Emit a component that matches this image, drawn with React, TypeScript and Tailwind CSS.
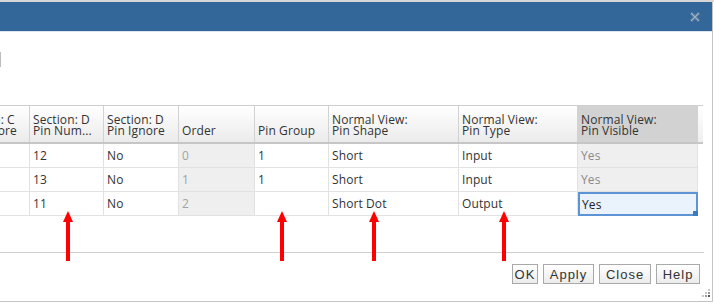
import React from 'react';

interface Column {
  title: string[];
  width: number;
  kind?: 'order' | 'visible';
}

const columns: Column[] = [
  { title: ['Section: C', 'Pin Ignore'], width: 74 },
  { title: ['Section: D', 'Pin Num...'], width: 74 },
  { title: ['Section: D', 'Pin Ignore'], width: 75 },
  { title: ['Order'], width: 76, kind: 'order' },
  { title: ['Pin Group'], width: 74 },
  { title: ['Normal View:', 'Pin Shape'], width: 130 },
  { title: ['Normal View:', 'Pin Type'], width: 119 },
  { title: ['Normal View:', 'Pin Visible'], width: 120, kind: 'visible' },
];

const rows: string[][] = [
  ['No', '12', 'No', '0', '1', 'Short', 'Input', 'Yes'],
  ['No', '13', 'No', '1', '1', 'Short', 'Input', 'Yes'],
  ['No', '11', 'No', '2', '', 'Short Dot', 'Output', 'Yes'],
];

// centres des flèches rouges (annotations)
const arrows = [68, 282, 374, 504];

const Arrow = ({ x }: { x: number }) => (
  <svg className="absolute top-[211px]" style={{ left: x - 5 }} width="10" height="50" viewBox="0 0 10 50">
    <polygon points="0,11 5,0 10,11" fill="#ff0000" />
    <rect x="3" y="10" width="4" height="40" fill="#ff0000" />
  </svg>
);

const Button = ({ label, w }: { label: string; w: number }) => (
  <button
    className="h-[20px] border border-[#a9a9a9] bg-gradient-to-b from-white to-[#ececec] text-[13px] tracking-[1px] leading-none text-[#333] font-['Liberation_Sans',Arial,sans-serif]"
    style={{ width: w }}
  >
    {label}
  </button>
);

export default function App() {
  return (
    <div className="relative w-[714px] h-[303px] overflow-hidden bg-white font-['Open_Sans',sans-serif] tracking-[0.1px]">
      <div className="h-[2px] bg-[#d6d6d6]" />
      <div className="w-[713px] h-[300px] border-r border-b border-[#c4c4c4] flex flex-col">
        {/* barre de titre */}
        <div className="h-[29px] bg-[#336699] flex items-center justify-end pr-[12px]">
          <svg width="10" height="10" viewBox="0 0 10 10">
            <path d="M1 1 L9 9 M9 1 L1 9" stroke="#6e8aa9" strokeWidth="2.6" />
            <path d="M1 1 L9 9 M9 1 L1 9" stroke="#9fb2c6" strokeWidth="1" />
          </svg>
        </div>
        <div className="h-px bg-[#dde4ec]" />

        {/* champ coupé à gauche */}
        <div className="mt-[20px] ml-[-9px] w-[10px] h-[15px] border border-[#bdbdbd]" />

        {/* tableau */}
        <div className="mt-[38px] ml-[-44px] border-t border-[#cfcfcf] w-fit">
          <div className="flex border-b-2 border-[#c6c6c6]">
            {columns.map((c, i) => (
              <div
                key={i}
                className={`h-[36px] flex flex-col justify-end px-[3px] pb-[6px] border-r border-[#d2d2d2] text-[12px] leading-[11px] text-[#333] whitespace-nowrap overflow-hidden ${
                  c.kind === 'visible' ? 'bg-[#d2d2d2]' : 'bg-gradient-to-b from-white to-[#ebebeb]'
                }`}
                style={{ width: c.width }}
              >
                {c.title.map((t, j) => (
                  <span key={j}>{t}</span>
                ))}
              </div>
            ))}
            <div className="w-[5px] h-[36px] bg-gradient-to-b from-white to-[#efefef]" />
          </div>
          {rows.map((r, ri) => (
            <div key={ri} className="flex">
              {r.map((v, ci) => {
                const c = columns[ci];
                const selected = c.kind === 'visible' && ri === 2;
                if (selected) {
                  return (
                    <div
                      key={ci}
                      className="relative h-[24px] px-[2px] pt-[1px] flex items-center border-2 border-[#5d94d6] bg-[#eaf2fc] text-[12px] text-[#222]"
                      style={{ width: c.width }}
                    >
                      {v}
                      <div className="absolute right-[-2px] bottom-[-2px] w-[5px] h-[5px] bg-[#3f78c2]" />
                    </div>
                  );
                }
                const bg = c.kind ? 'bg-[#efefef]' : 'bg-white';
                const color = c.kind === 'order' ? 'text-[#a3a3a3]' : c.kind === 'visible' ? 'text-[#8a8a8a]' : 'text-[#333]';
                return (
                  <div
                    key={ci}
                    className={`h-[24px] px-[3px] pt-[1px] flex items-center border-b border-r border-[#e2e2e2] text-[12px] ${bg} ${color}`}
                    style={{ width: c.width }}
                  >
                    {v}
                  </div>
                );
              })}
            </div>
          ))}
        </div>

        {/* pied */}
        <div className="mt-[36px] mr-[8px] h-px bg-[#cdcdcd]" />
        <div className="mt-[11px] flex justify-end pr-[12px]">
          <div className="flex gap-[5px]">
            <Button label="OK" w={26} />
            <Button label="Apply" w={51} />
            <Button label="Close" w={52} />
            <Button label="Help" w={44} />
          </div>
        </div>
        <div className="flex-1 flex justify-end items-end pr-[2px] pb-[2px]">
          <svg width="8" height="10" viewBox="0 0 8 10">
            <rect x="6" y="0" width="2" height="2" fill="#c8c8c8" />
            <rect x="6" y="3" width="2" height="2" fill="#9a9a9a" />
            <rect x="3" y="3" width="2" height="2" fill="#c8c8c8" />
            <rect x="6" y="6" width="2" height="2" fill="#555" />
            <rect x="3" y="6" width="2" height="2" fill="#9a9a9a" />
            <rect x="0" y="6" width="2" height="2" fill="#c8c8c8" />
          </svg>
        </div>
      </div>

      {arrows.map((x) => (
        <Arrow key={x} x={x} />
      ))}
    </div>
  );
}
